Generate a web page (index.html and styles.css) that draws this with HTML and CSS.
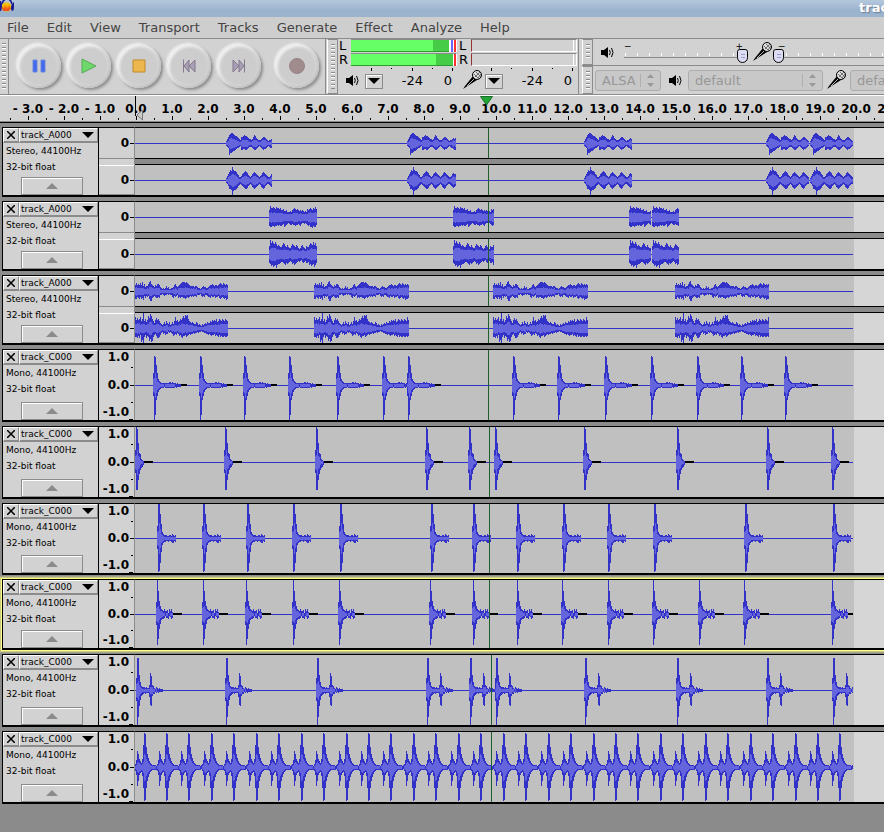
FILE: index.html
```html
<!DOCTYPE html>
<html lang="en">
<head>
  <meta charset="UTF-8">
  <title>Audacity</title>
  <meta name="viewport" content="width=device-width, initial-scale=1.0">
  <link rel="stylesheet" href="styles.css">
</head>
<body>

  <svg class="defs" width="0" height="0" aria-hidden="true">
    <symbol id="speaker" viewBox="0 0 13 13">
      <path d="M0 4h3l4-3v11l-4-3H0z" fill="#000"/>
      <path d="M8.500 4q1.500 2.500 0 5M10.500 2q3 4.500 0 9" fill="none" stroke="#000"/>
    </symbol>
    <symbol id="mic" viewBox="0 0 20 20">
      <path d="M10 6l4 4L3 17l-3 2 2-3z" fill="#000"/>
      <path d="M11 9l-7 7" stroke="#bbb" fill="none"/>
      <circle cx="14" cy="5" r="4.500" fill="#ddd" stroke="#000"/>
      <path d="M11 4l5 5M13 2l5 5M12 7l5-5M15 8l3-4" stroke="#555" fill="none" stroke-width=".8"/>
    </symbol>
  </svg>

  <header class="titlebar">
    <svg class="logo" width="14" height="14" viewBox="0 0 14 14">
      <path d="M2 4Q3-1 7-1t5 5" fill="none" stroke="#1a1a8c" stroke-width="1.500"/>
      <ellipse cx="6.500" cy="7" rx="5" ry="4.500" fill="#f7c400"/>
      <path d="M2 8l1-2 1 3 1-5 1 5 1-4 1 4 1-5 1 4 1-1v1l-2 3H3z" fill="#f0541e"/>
      <path d="M0 1h1q2 5 0 10H0zM14 2q-5 4-2 9 2 0 2-4z" fill="#1a1a8c"/>
    </svg>
    <span class="window-title">track</span>
  </header>

  <nav class="menu">
    <button>File</button>
    <button>Edit</button>
    <button>View</button>
    <button>Transport</button>
    <button>Tracks</button>
    <button>Generate</button>
    <button>Effect</button>
    <button>Analyze</button>
    <button>Help</button>
  </nav>

  <div class="toolbars">
    <div class="toolbar">
      <div class="grip"></div>
      <div class="transport">
        <button class="round" aria-label="Pause"><svg width="16" height="16"><path d="M2 2h4v12H2zM10 2h4v12h-4z" fill="#4169f0" stroke="#6d86d8"/></svg></button>
        <button class="round" aria-label="Play"><svg width="16" height="16"><path d="M1 1l14 7-14 7z" fill="#6fd86a" stroke="#55a855"/></svg></button>
        <button class="round" aria-label="Stop"><svg width="16" height="16"><path d="M2 2h12v12H2z" fill="#ecb74e" stroke="#c08a28"/></svg></button>
        <button class="round" aria-label="Skip to start"><svg width="16" height="16"><path d="M2.500 1.500v13M8 2L3 8l5 6zM14 2L8 8l6 6z" fill="#a99fb5" stroke="#84798f"/></svg></button>
        <button class="round" aria-label="Skip to end"><svg width="16" height="16"><path d="M13.500 1.500v13M8 2l5 6-5 6zM2 2l6 6-6 6z" fill="#a99fb5" stroke="#84798f"/></svg></button>
        <button class="round record" aria-label="Record"><svg width="16" height="16"><circle cx="8" cy="8" r="7.500" fill="#a08c8c" stroke="#978484"/></svg></button>
      </div>
    </div>

    <div class="toolbar">
      <div class="grip boxed"></div>
      <div class="meter">
        <div class="channel-names"><span>L</span><span>R</span></div>
        <div class="bars">
          <div class="bar play"><i class="rms left"></i><i class="peak left"></i><i class="hold"></i><i class="clip"></i></div>
          <div class="bar play"><i class="rms right"></i><i class="peak right"></i><i class="clip"></i></div>
        </div>
        <div class="meter-foot">
          <svg class="speaker" width="13" height="13"><use href="#speaker"/></svg>
          <button class="drop" aria-label="Playback meter options"></button>
          <span class="db">-24</span><span class="zero">0</span>
        </div>
      </div>
      <div class="meter">
        <div class="channel-names"><span>L</span><span>R</span></div>
        <div class="bars">
          <div class="bar input"></div>
          <div class="bar input"></div>
        </div>
        <div class="meter-foot">
          <svg class="mic" width="20" height="20"><use href="#mic"/></svg>
          <button class="drop" aria-label="Recording meter options"></button>
          <span class="db">-24</span><span class="zero">0</span>
        </div>
      </div>
    </div>

    <div class="stack">
      <div class="toolbar mixer">
        <div class="grip boxed"></div>
        <svg class="speaker" width="13" height="13"><use href="#speaker"/></svg>
        <div class="slider output">
          <div class="ends"><span>−</span><span>+</span></div>
          <input type="range" min="0" max="100" value="98" aria-label="Output volume">
        </div>
        <svg class="mic" width="20" height="20"><use href="#mic"/></svg>
        <div class="slider capture">
          <div class="ends"><span>−</span><span>+</span></div>
          <input type="range" min="0" max="100" value="0" aria-label="Input volume">
        </div>
      </div>
      <div class="toolbar device">
        <div class="grip boxed"></div>
        <div class="select host">
          <select disabled aria-label="Audio host"><option>ALSA</option></select>
          <svg width="7" height="13"><path d="M0 4l3.500-4L7 4zM0 9l3.500 4L7 9z"/></svg>
        </div>
        <svg class="speaker" width="13" height="13"><use href="#speaker"/></svg>
        <div class="select playback">
          <select disabled aria-label="Output device"><option>default</option></select>
          <svg width="7" height="13"><path d="M0 4l3.500-4L7 4zM0 9l3.500 4L7 9z"/></svg>
        </div>
        <svg class="mic" width="20" height="20"><use href="#mic"/></svg>
        <div class="select recording">
          <select disabled aria-label="Input device"><option>default</option></select>
          <svg width="7" height="13"><path d="M0 4l3.500-4L7 4zM0 9l3.500 4L7 9z"/></svg>
        </div>
      </div>
    </div>
  </div>

  <div class="ruler" id="ruler">
    <svg class="start-mark" width="8" height="25"><path d="M.5 0v20" stroke="#000"/><path d="M7.500 14v10L2 19z" fill="#ccc" stroke="#777"/></svg>
    <svg class="play-mark" width="13" height="10"><path d="M.5.5h12L6.500 9z" fill="#1ea532" stroke="#1b6e2a"/></svg>
  </div>

  <main class="tracks" id="tracks"></main>

  <script src="script.js"></script>
</body>
</html>
```
FILE: styles.css
```css
* { box-sizing: border-box; }

body {
  margin: 0;
  min-height: 100vh;
  background: #8b8b8b;
  font-family: "DejaVu Sans", sans-serif;
  font-size: 13px;
  color: #000;
  overflow: hidden;
}

button {
  font: inherit;
  color: inherit;
  padding: 0;
  border: 0;
  background: none;
}

svg { flex: none; display: block; }
.defs { position: absolute; }

/* title and menu */
.titlebar {
  display: flex;
  justify-content: space-between;
  height: 17px;
  overflow: hidden;
  background: linear-gradient(#b4c8dc, #9cb3cd 60%, #9cb3cd);
}
.window-title {
  width: 25px;
  line-height: 15px;
  font-weight: bold;
  color: #fff;
  text-shadow: 1px 1px 1px #667c94;
  overflow: hidden;
  white-space: nowrap;
}
.menu {
  display: flex;
  gap: 18px;
  height: 22px;
  padding-left: 7px;
  background: #cecece;
  border-bottom: 1px solid #8b8b8b;
  color: #444;
}

/* toolbars */
.toolbars {
  display: flex;
  height: 57px;
  background: #d2d2d2;
  border-bottom: 1px solid #fff;
  box-shadow: inset 0 -1px #8b8b8b;
  padding-bottom: 1px;
}
.toolbar {
  display: flex;
  border-right: 1px solid #8b8b8b;
}
.grip {
  flex: none;
  width: 9px;
  border-right: 1px solid #8b8b8b;
  background: repeating-linear-gradient(#8b8b8b 0 1px, #fff 1px 2px, #d2d2d2 2px 4px) 2px 4px / 4px 46px no-repeat;
}
.grip.boxed {
  width: 11px;
  margin-left: 1px;
  border: 1px solid #8b8b8b;
  border-left-color: #fff;
  background-position: 3px 4px;
  background-size: 4px calc(100% - 8px);
}
.transport {
  display: flex;
  align-items: center;
  gap: 6px;
  padding: 0 6px 2px 8px;
}
.round {
  display: grid;
  place-items: center;
  width: 44px;
  height: 44px;
  border-radius: 50%;
  background: radial-gradient(circle, #cdcdcd 55%, #dedede 70%);
  box-shadow: 2px 2px 3px #8c8c8c, -1px -1px 2px #f4f4f4, inset 2px 2px 3px #f2f2f2, inset -1px -1px 3px #b4b4b4;
}
.record { margin-left: 8px; }

.meter {
  display: grid;
  grid-template-columns: 12px 106px;
  grid-template-rows: 30px 22px;
  padding-left: 1px;
  width: 120px;
}
.channel-names {
  display: grid;
  line-height: 14px;
  padding-bottom: 2px;
}
.bars {
  display: grid;
  grid-template-rows: 14px 14px;
  align-content: start;
  height: 32px;
  background:
    linear-gradient(#000, #000) 20px 29px / 1px 3px no-repeat,
    linear-gradient(#000, #000) 40px 29px / 1px 1px no-repeat,
    linear-gradient(#000, #000) 61px 29px / 1px 3px no-repeat,
    linear-gradient(#000, #000) 81px 29px / 1px 1px no-repeat,
    linear-gradient(#000, #000) 101px 29px / 1px 3px no-repeat;
}
.bar {
  display: flex;
  margin-bottom: 1px;
  border-bottom: 1px solid #fff;
  border-top: 1px solid #8b8b8b;
  border-right: 1px solid #fff;
}
.play { border-bottom: 0; background: #fff; }
.play i { box-shadow: inset 0 -1px #2f9c2f; }
.rms { background: #66ff66; }
.peak { background: #47cc47; }
.rms.left { width: 82px; }
.peak.left { width: 16px; }
.rms.right { width: 85px; }
.peak.right { width: 17px; }
.play .hold { width: 2px; margin-left: 2px; background: #6666ff; box-shadow: none; }
.play .clip { width: 2px; margin-left: auto; background: #ff3232; box-shadow: none; }
.input {
  border-left: 1px solid #963232;
  background: linear-gradient(90deg, #fff, #fff) 101px 0 / 1px 100% no-repeat;
}
.meter-foot {
  grid-column: 1 / -1;
  display: flex;
  align-items: center;
  padding-left: 7px;
}
.meter-foot .speaker { margin-right: 6px; }
.meter-foot .mic { margin: 0 2px 0 -3px; }
.drop {
  display: grid;
  place-items: center;
  width: 18px;
  height: 15px;
  margin-top: 2px;
  border: 1px solid #8b8b8b;
  box-shadow: inset 1px 1px #fff;
}
.drop::after {
  content: "";
  border: 6px solid transparent;
  border-top-color: #000;
  border-bottom: 0;
}
.db { margin-left: auto; }
.zero { width: 29px; text-align: right; }
.meter-foot { padding-right: 5px; }

.stack { flex: 1; min-width: 0; margin-left: 3px; }
.stack .toolbar { height: 27px; align-items: center; overflow: hidden; border-right: 0; }
.stack .grip { height: 100%; margin-left: 0; }
.stack .mixer { border-bottom: 1px solid #8b8b8b; }
.stack .device { height: 28px; }
.mixer .speaker { margin: 0 10px 0 8px; }
.slider {
  flex: none;
  width: 126px;
  height: 25px;
  background:
    linear-gradient(#8b8b8b, #8b8b8b) 0 17px / 100% 1px no-repeat,
    repeating-linear-gradient(90deg, #fff 0 1px, transparent 1px 12px) 1px 13px / 100% 3px no-repeat;
}
.output { background-size: 120px 1px, 116px 3px; }
.ends {
  display: flex;
  justify-content: space-between;
  height: 8px;
  font-size: 9px;
  line-height: 12px;
}
.output .ends { padding-right: 7px; }
.capture .ends { padding-left: 5px; }
.slider input {
  display: block;
  width: 100%;
  height: 15px;
  margin: 1px 0 0;
  appearance: none;
  background: none;
}
.slider input::-webkit-slider-thumb {
  appearance: none;
  width: 11px;
  height: 14px;
  border: 1px solid #000;
  border-radius: 3px 3px 6px 6px;
  background: linear-gradient(#9c9cc8, #9c9cc8) 3px 4px / 4px 1px no-repeat, linear-gradient(#9c9cc8, #9c9cc8) 3px 7px / 4px 1px no-repeat, #dcdcf2;
}
.mixer .mic { margin-left: 3px; }

.select { position: relative; flex: none; }
.select select {
  display: block;
  width: 100%;
  height: 21px;
  padding: 0 6px;
  font: inherit;
  color: #979797;
  opacity: 1;
  border: 1px solid #adadad;
  border-radius: 3px;
  background: linear-gradient(#b0b0b0, #b0b0b0) right 19px center / 1px 13px no-repeat, #c8c8c8;
  appearance: none;
}
.select svg { position: absolute; right: 7px; top: 4px; fill: #999; }
.host { width: 66px; margin-left: 2px; }
.playback { width: 135px; }
.recording { width: 135px; }
.device .speaker { margin: 0 6px 0 8px; }
.device .mic { margin: 0 3px 0 4px; }

/* timeline */
.ruler {
  position: relative;
  display: flex;
  height: 27px;
  padding-left: 10px;
  overflow: hidden;
  background: #d2d2d2;
  border-bottom: 1px solid #000;
  box-shadow: inset 0 -1px #8b8b8b;
}
.second {
  flex: none;
  display: flex;
  justify-content: center;
  width: 36px;
  height: 24px;
  font-size: 12px;
  font-weight: bold;
  line-height: 27px;
  white-space: nowrap;
  background:
    linear-gradient(#000, #000) 0 100% / 1px 2px no-repeat,
    linear-gradient(#000, #000) 18px 100% / 1px 4px no-repeat;
}
.start-mark { position: absolute; left: 135px; top: 0; }
.play-mark { position: absolute; left: 480px; top: 0; }

/* tracks */
.tracks {
  display: flex;
  flex-direction: column;
  gap: 4px;
  padding: 4px 0 28px 2px;
}
.track {
  display: flex;
  border-left: 1px solid #000;
  border-bottom: 2px solid #000;
}
.track.focused { box-shadow: 0 0 0 1px #ffff82, 0 0 0 2px #c8c887, 0 0 0 3px #a5a58a; }
.panel {
  flex: none;
  display: flex;
  flex-direction: column;
  width: 96px;
  background: #d2d2d2;
  border-top: 1px solid #000;
  border-right: 1px solid #000;
  font-size: 9px;
  line-height: 16px;
}
.head { display: flex; height: 15px; }
.close, .name {
  border: 1px solid #fff;
  border-right-color: #8b8b8b;
  border-bottom: 2px solid #8b8b8b;
}
.close { display: grid; place-items: center; width: 16px; }
.name {
  flex: 1;
  display: flex;
  align-items: center;
  justify-content: space-between;
  padding: 0 3px 0 1px;
  line-height: 12px;
}
.panel p { margin: 0; padding-left: 3px; white-space: nowrap; }
.collapse {
  display: grid;
  place-items: center;
  width: 62px;
  height: 18px;
  margin: auto 0 0 18px;
  border: 1px solid #8b8b8b;
  box-shadow: inset 1px 1px #fff;
}

.channels { flex: 1; min-width: 0; background: #8b8b8b; }
.channel { display: flex; }
.channel + .channel { margin-top: 5px; }
.scale {
  flex: none;
  display: flex;
  flex-direction: column;
  justify-content: space-between;
  width: 36px;
  padding: 0 5px 1px 0;
  font-size: 12px;
  font-weight: bold;
  line-height: 14px;
  text-align: right;
  border-top: 1px solid #000;
  border-right: 1px solid #8b8b8b;
  background:
    linear-gradient(#000, #000) right 0 top 50% / 4px 1px no-repeat,
    linear-gradient(#000, #000) right 1px top 25% / 2px 1px no-repeat,
    linear-gradient(#000, #000) right 1px top 75% / 2px 1px no-repeat,
    linear-gradient(#000, #000) right 1px bottom 0 / 4px 1px no-repeat,
    #d2d2d2;
}
.stereo .scale {
  justify-content: center;
  padding-bottom: 0;
  border-bottom: 1px solid #8b8b8b;
  background:
    linear-gradient(#000, #000) right 0 top 15px / 4px 1px no-repeat,
    #d2d2d2;
}
.stereo .channels { background: linear-gradient(90deg, #d2d2d2 35px, #8b8b8b 35px); }
.stereo .channel + .channel .scale { border-top-color: #d2d2d2; box-shadow: inset 0 1px #fff; }
.wave {
  flex: 1;
  min-width: 0;
  overflow: hidden;
  background: #d6d6d6;
  border-top: 1px solid #000;
}
.stereo .channel:first-child .wave { border-bottom: 1px solid #000; }
.wave svg { background: #c0c0c0; shape-rendering: crispEdges; }
.wave .peaks { fill: #3232c8; }
.wave .body { fill: #6464dc; }
.wave .quiet { fill: #000; }
.wave .cursor { fill: #1e5f2d; }
```
FILE: script.js
```js
// 36 px per second, wave area starts at 0.0
const CLIP_WIDTH = 719;

// half heights per pixel, [above, below] the zero line
const shapes = {
  guitarL: [
    [2,4,6,8,9,10,10,9,8,7,7,6,5,4,3,6,6,7,8,7,7,6,5,4,4,3,4,6,8,7,5,4,3,3,3,4,5,6,6,5,4,3,2,3,3,4,5,4,5],
    [2,3,4,11,9,9,8,7,7,6,5,4,4,3,2,6,6,5,5,6,6,5,4,3,3,3,4,5,6,6,5,4,3,2,3,4,5,6,5,5,4,3,2,3,4,4,5,6,6]
  ],
  guitarR: [
    [2,4,6,8,10,9,13,10,9,9,8,6,5,3,3,4,6,7,8,9,8,7,5,4,3,4,6,7,8,7,6,5,4,3,4,5,7,8,7,6,5,4,3,3,4,6,7,6,6],
    [2,3,5,8,8,9,15,10,9,9,8,7,5,4,3,4,5,6,7,8,8,7,5,4,3,4,6,7,8,7,6,5,4,3,4,6,7,8,7,5,4,3,3,4,5,6,7,6,5]
  ],
  organL: [
    [7,11,9,9,10,9,8,10,9,9,8,9,7,7,8,6,6,7,5,5,5,6,5,7,8,9,8,7,8,7,6,7,6,7,6,5,6,5,8,7,8,9,8,7,9,8,10,8],
    [8,9,9,8,8,9,8,8,7,8,7,8,8,7,6,9,8,7,6,5,6,7,7,6,7,7,8,7,7,6,7,8,6,5,5,6,5,6,7,8,7,9,9,10,8,9,9,7]
  ],
  organR: [
    [8,14,11,13,11,10,12,10,8,9,8,7,7,9,11,10,8,7,9,7,6,6,8,10,9,8,7,9,8,6,5,6,8,9,7,6,5,8,7,7,9,11,10,9,12,9,11,8],
    [8,9,11,10,12,11,10,13,10,9,9,8,7,7,8,9,10,8,9,8,7,6,7,9,8,10,9,8,7,6,7,6,5,7,8,7,6,8,8,7,10,9,11,10,9,12,10,8]
  ],
  bassL: [
    [6,8,6,7,6,8,6,9,5,7,4,5,5,7,9,10,7,6,5,4,6,5,7,7,6,4,3,2,3,2,3,5,3,4,2,2,3,3,4,6,7,5,4,5,6,7,8,9,9,9,8,9,8,7,6,5,5,5,5,4,5,5,4,3,3,2,3,4,5,4,4,3,3,4,5,6,6,7,6,5,6,6,5,6,7,8,7,6,8,7,6,7,6,7,6],
    [7,7,5,6,7,5,7,6,8,4,6,4,5,4,7,9,9,6,5,4,5,6,6,5,6,3,3,2,3,4,3,3,2,3,2,3,3,5,6,4,5,4,3,6,5,6,5,5,6,6,7,6,5,6,5,4,5,4,5,4,4,5,3,3,3,2,4,5,4,5,3,3,4,5,5,6,4,5,5,4,6,5,5,4,6,7,6,5,6,7,6,8,7,7,6]
  ],
  bassR: [
    [11,8,10,8,9,11,7,9,15,7,9,6,8,12,10,14,12,9,7,5,8,10,8,9,7,5,4,3,4,6,4,7,5,4,6,3,4,6,4,7,11,7,8,6,7,9,8,10,12,10,13,12,13,9,7,6,5,6,5,4,4,6,5,3,4,3,2,4,3,4,5,4,6,5,5,7,6,8,7,8,7,9,6,7,9,8,7,9,8,7,9,8,7,11,8],
    [8,8,9,7,9,6,13,11,15,8,6,9,7,8,12,10,13,12,8,6,5,7,9,9,8,6,4,3,5,4,6,5,5,3,4,3,4,5,7,6,5,6,4,5,7,6,8,9,7,7,6,8,7,6,5,6,5,5,4,5,4,4,3,4,3,3,2,3,3,4,4,5,5,6,5,6,7,6,6,5,7,6,7,8,6,8,7,8,8,7,8,8,7,8,7]
  ],
  snare: [
    [12,29,28,20,12,6,4,3,2,2,2,2,2,2,2,2,3,3,2,3,2,2,2,1,2,1,1,1],
    [10,34,29,14,10,6,4,3,2,2,2,1,2,2,2,2,2,2,2,2,2,2,1,2,1,1,1,1]
  ],
  kick: [
    [12,35,33,19,9,8,3,2,1],
    [10,27,27,17,11,7,5,4,2]
  ],
  tom: [
    [12,35,34,24,14,6,4,3,3,3,2,2,3,3,2,4,3,2,3],
    [10,33,32,24,13,6,4,3,3,2,2,3,2,2,3,4,4,2,3]
  ],
  clap: [
    [12,35,23,13,8,5,4,3,5,3,3,4,1,5,3,5,2],
    [10,30,24,14,9,5,4,4,3,1,3,3,4,1,2,4,3]
  ],
  clapHard: [
    [12,32,32,15,8,4,3,3,3,2,3,2,2,5,17,14,5,4,2,1,3,2,1,2,1,1,1],
    [10,35,26,15,9,5,4,3,2,3,2,2,2,6,14,15,5,3,3,1,2,1,2,1,1,1,1]
  ],
  hat: [
    [3,7,16,13,8,6,4,8,22,34,33,20,13,9,6,4,3,2,2,2,2,1,2],
    [3,7,18,13,7,5,4,8,20,33,32,20,13,9,6,4,3,2,2,2,2,2,1]
  ]
};

const tracks = [
  { name: 'track_A000', height: 30, waves: ['guitarL', 'guitarR'], hits: [[226,46],[407,49],[584,48],[766,43],[810,43]], cursor: 488 },
  { name: 'track_A000', height: 30, waves: ['organL', 'organR'], hits: [[269,48],[453,41],[629,22],[652,27]], cursor: 488 },
  { name: 'track_A000', height: 30, waves: ['bassL', 'bassR'], hits: [[135,93],[314,95],[493,95],[675,94]], cursor: 488 },
  { name: 'track_C000', height: 70, waves: ['snare'], quiet: 6, hits: [153,199,243,288,336,382,407,512,557,604,650,696,740,784], cursor: 488 },
  { name: 'track_C000', height: 70, waves: ['kick'], quiet: 9, hits: [135,224,315,425,468,494,583,676,766,831], cursor: 489 },
  { name: 'track_C000', height: 69, waves: ['tom'], hits: [157,202,246,292,339,430,472,516,562,607,653,744,832], cursor: 489 },
  { name: 'track_C000', height: 68, waves: ['clap'], quiet: 9, focused: true, hits: [156,202,245,292,338,429,472,516,561,607,652,698,743,831], cursor: 489 },
  { name: 'track_C000', height: 70, waves: ['clapHard'], hits: [136,225,316,426,469,495,584,676,766,832], cursor: 491 },
  { name: 'track_C000', height: 70, waves: ['hat'], hits: Array.from({ length: 32 }, (_, i) => Math.round(134.5 + i * 22.45)), cursor: 491 }
];

function column(x, mid, up, down) {
  return `M${x} ${mid - up}h1v${up + down + 1}h-1z`;
}

function drawWave(track, shapeName) {
  const [above, below] = shapes[shapeName];
  const mid = Math.floor(track.height / 2);
  const up = new Array(CLIP_WIDTH).fill(0);
  const down = new Array(CLIP_WIDTH).fill(0);
  let quiet = '';

  track.hits.forEach(hit => {
    const [start, length] = Array.isArray(hit) ? hit : [hit, above.length];
    for (let i = 0; i < length; i++) {
      const x = start - 135 + i;
      if (x < 0) continue;
      if (x >= CLIP_WIDTH - 1) break;
      up[x] = Math.max(up[x], above[i % above.length]);
      down[x] = Math.max(down[x], below[i % below.length]);
    }
    if (track.quiet) {
      const from = start - 135 + length;
      const width = Math.min(track.quiet, CLIP_WIDTH - 1 - from);
      quiet += `<rect class="quiet" x="${from}" y="${mid - 1}" width="${width}" height="2"/>`;
    }
  });

  const mono = track.waves.length === 1;
  let peaks = '';
  let body = '';
  for (let x = 0; x < CLIP_WIDTH; x++) {
    if (!up[x]) continue;
    peaks += column(x, mid, up[x], down[x]);
    const near = Math.min(up[x], down[x], (up[x - 1] || up[x]) + 1, (up[x + 1] || up[x]) + 1);
    const inner = Math.min(Math.floor(near * 0.6), mono ? 16 : 6);
    if (inner > 0) body += column(x, mid, inner, inner);
  }

  return `<svg width="${CLIP_WIDTH}" height="${track.height}">
    <rect class="peaks" x="0" y="${mid}" width="718" height="1"/>
    ${quiet}
    <path class="peaks" d="${peaks}"/>
    <path class="body" d="${body}"/>
    <rect class="cursor" x="${track.cursor - 135}" y="0" width="1" height="${track.height}"/>
  </svg>`;
}

function drawTrack(track) {
  const stereo = track.waves.length === 2;
  const scale = stereo ? '<span>0</span>' : '<span>1.0</span><span>0.0</span><span>-1.0</span>';
  const channels = track.waves.map(wave => `
    <div class="channel">
      <div class="scale">${scale}</div>
      <div class="wave">${drawWave(track, wave)}</div>
    </div>`).join('');

  return `
    <section class="track ${stereo ? 'stereo' : 'mono'} ${track.focused ? 'focused' : ''}">
      <div class="panel">
        <div class="head">
          <button class="close" aria-label="Close track"><svg width="8" height="8"><path d="M0 0l8 8M8 0L0 8" stroke="#000" stroke-width="1.500"/></svg></button>
          <button class="name">${track.name}<svg width="12" height="6"><path d="M0 0h12L6 6z"/></svg></button>
        </div>
        <p>${stereo ? 'Stereo' : 'Mono'}, 44100Hz</p>
        <p>32-bit float</p>
        <button class="collapse" aria-label="Collapse track"><svg width="12" height="6"><path d="M0 6h12L6 0z" fill="#8b8b8b"/></svg></button>
      </div>
      <div class="channels">${channels}</div>
    </section>`;
}

let seconds = '';
for (let s = -3; s <= 21; s++) {
  seconds += `<div class="second">${s < 0 ? '- ' : ''}${Math.abs(s).toFixed(1)}</div>`;
}
document.getElementById('ruler').insertAdjacentHTML('afterbegin', seconds);
document.getElementById('tracks').innerHTML = tracks.map(drawTrack).join('');
```
